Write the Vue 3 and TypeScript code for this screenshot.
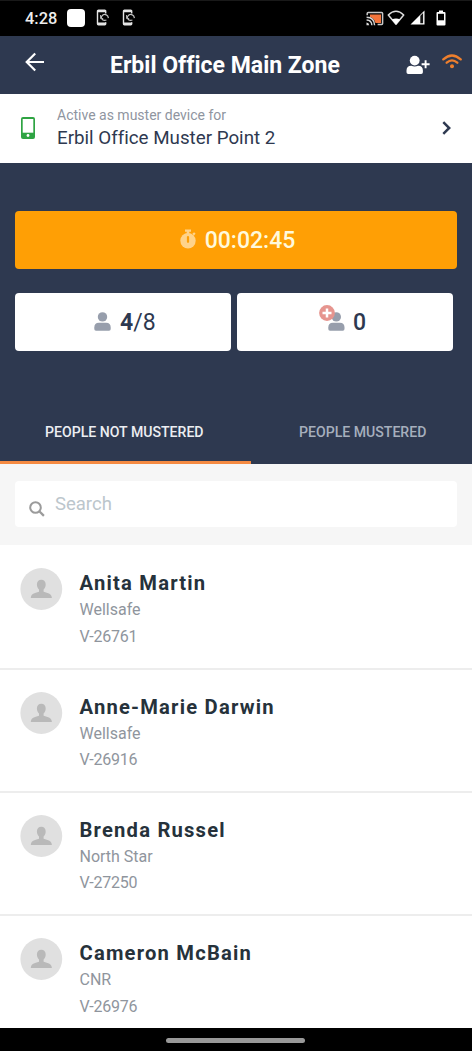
<script setup lang="ts">
interface Person {
  name: string
  company: string
  code: string
}

const people: Person[] = [
  { name: 'Anita Martin', company: 'Wellsafe', code: 'V-26761' },
  { name: 'Anne-Marie Darwin', company: 'Wellsafe', code: 'V-26916' },
  { name: 'Brenda Russel', company: 'North Star', code: 'V-27250' },
  { name: 'Cameron McBain', company: 'CNR', code: 'V-26976' },
]
</script>

<template>
  <div class="screen">
    <div class="status">
      <span class="clock">4:28</span>
      <span class="app-square"></span>
      <svg v-for="n in 2" :key="n" class="sync" viewBox="0 0 14 18">
        <path d="M9.7 4.600V2.200q0-.9-.9-.9H2.400q-.9 0-.9.9v12.600q0 .9.9.9h6.400q.9 0 .9-.9v-1.600" fill="none" stroke="#e4e4e4" stroke-width="1.400" />
        <path d="M1.500 2.400h8.200M1.500 14.300h8.200" stroke="#e4e4e4" stroke-width="1.800" />
        <path d="M5.400 9.200a3.300 3.300 0 0 1 5-3.300q1.800.8 2 3.200M5.600 9.500q1.500 2.700 4.800 1.500" fill="none" stroke="#c4c4c4" stroke-width="1.200" />
        <path d="M4.600 6v3.600h2.600" fill="none" stroke="#bcbcbc" stroke-width="1" />
      </svg>
      <span class="grow"></span>
      <svg class="cast" viewBox="0 0 18 15">
        <path d="M4 3.500h11v8.500H9.500Q8 7 4 6z" fill="#f4743b" />
        <path d="M1.200 4.300V2.400q0-1 1-1h13.400q1 0 1 1v10.200q0 1-1 1h-4" fill="none" stroke="#c9c9c9" stroke-width="1.500" />
        <path d="M.6 6.200q7.800.2 8 8M.6 9q5 .2 5.300 5.200" fill="none" stroke="#d6d6d6" stroke-width="1.400" />
        <path d="M.5 11.600q2.500.2 2.700 2.700H.5z" fill="#ddd" />
      </svg>
      <svg class="net" viewBox="0 0 18 16">
        <path d="M1.300 5Q9-2.500 16.700 5L9 14.200z" fill="none" stroke="#ddd" stroke-width="1.500" stroke-linejoin="round" />
        <path d="M4.800 9.500Q9 7.500 13.200 9.500L9 14.600z" fill="#fff" />
      </svg>
      <svg class="signal" viewBox="0 0 15 15">
        <path d="M.5 14.500L14.500.5v14z" fill="#fff" />
        <path d="M10.300 5.700l2.800-2.800v10.400h-2.800z" fill="#111" />
      </svg>
      <svg class="battery" viewBox="0 0 10 16">
        <path d="M3 .5h4V2h1.500q1 0 1 1v11.500q0 1-1 1h-7q-1 0-1-1V3q0-1 1-1H3z" fill="#fff" />
        <path d="M2 3.800h6v6.500H2z" fill="#000" />
      </svg>
    </div>

    <header class="header">
      <svg class="back" viewBox="0 0 20 20">
        <path d="M19 10H2M10.200 1.500L1.700 10l8.500 8.500" fill="none" stroke="#fff" stroke-width="2.200" />
      </svg>
      <h1 class="title">Erbil Office Main Zone</h1>
      <svg class="add-user" viewBox="0 0 24 20">
        <circle cx="8.700" cy="5.600" r="4.900" fill="#fff" />
        <path d="M.5 17.300v-1.800q0-4.800 4.800-4.800 3.400 1.400 6.800 0 4.800 0 4.800 4.800v1.800q0 1.700-1.700 1.700h-13Q.5 19 .5 17.300z" fill="#fff" />
        <path d="M19.600 5.200v8M15.600 9.200h8" stroke="#fff" stroke-width="1.900" />
      </svg>
      <svg class="wifi" viewBox="0 0 20 15">
        <path d="M1.300 5.400q8.700-7.800 17.400 0M4.700 8.700q5.300-4.700 10.600 0" fill="none" stroke="#ee7f2d" stroke-width="2.300" stroke-linecap="round" />
        <circle cx="10" cy="12.200" r="2" fill="#ee7f2d" />
      </svg>
    </header>

    <div class="device">
      <svg class="phone" viewBox="0 0 14 22">
        <rect width="14" height="22" rx="2" fill="#2fa443" />
        <path d="M1.700 2h10.600v13.700H1.700z" fill="#fff" />
        <circle cx="7" cy="18.500" r="1.400" fill="#fff" />
      </svg>
      <div class="device-text">
        <div class="device-label">Active as muster device for</div>
        <div class="device-name">Erbil Office Muster Point 2</div>
      </div>
      <svg class="chevron" viewBox="0 0 9 14">
        <path d="M1.300 1.200L7.200 7l-5.900 5.800" fill="none" stroke="#2e3950" stroke-width="2.500" />
      </svg>
    </div>

    <section class="panel">
      <div class="timer">
        <svg class="stopwatch" viewBox="0 0 16 20">
          <path d="M5 .5h6v2.300H9.300V5H6.700V2.800H5zM12.300 4.800l1.800-1.600 1.500 1.600-1.700 1.800z" fill="#ffd38a" />
          <circle cx="8" cy="11.800" r="7.700" fill="#ffd38a" />
          <path d="M8 8v4.800" stroke="#ff9f05" stroke-width="2.200" stroke-linecap="round" />
        </svg>
        <span>00:02:45</span>
      </div>
      <div class="counts">
        <div class="count count-left">
          <svg class="person" viewBox="0 0 17 19">
            <circle cx="8.500" cy="4.900" r="4.700" fill="#979eac" />
            <path d="M.3 17v-1.600q0-4.700 4.600-4.700h7.200q4.600 0 4.600 4.700V17q0 1.700-1.700 1.700H2Q.3 18.700.3 17z" fill="#979eac" />
          </svg>
          <span><b>4</b>/8</span>
        </div>
        <div class="count count-right">
          <svg class="injured" viewBox="0 0 26 26">
            <circle cx="17.300" cy="11.900" r="4.700" fill="#979eac" />
            <path d="M9.300 24v-1.600q0-4.700 4.600-4.700h7q4.600 0 4.600 4.700V24q0 1.700-1.700 1.700H11q-1.700 0-1.700-1.700z" fill="#979eac" />
            <circle cx="8" cy="8" r="7.900" fill="#e6958f" />
            <path d="M8 3.500v9M3.500 8h9" stroke="#fff" stroke-width="2.500" />
          </svg>
          <span class="zero">0</span>
        </div>
      </div>
      <nav class="tabs">
        <div class="tab active">PEOPLE NOT MUSTERED</div>
        <div class="tab">PEOPLE MUSTERED</div>
      </nav>
    </section>

    <div class="search-area">
      <div class="search">
        <svg class="glass" viewBox="0 0 16 16">
          <circle cx="6.500" cy="6.500" r="5.300" fill="none" stroke="#9b9b9b" stroke-width="2" />
          <path d="M10.300 10.300l4.600 4.600" stroke="#9b9b9b" stroke-width="2.300" />
        </svg>
        <span class="placeholder">Search</span>
      </div>
    </div>

    <main class="list">
      <article v-for="p in people" :key="p.code" class="row">
        <svg class="avatar" viewBox="0 0 43 42">
          <circle cx="21.300" cy="21" r="20.900" fill="#e0e0e0" />
          <path d="M21.300 11.700c2.700 0 4.400 1.900 4.400 4.800 0 2-.8 3.900-2.100 5v2.300c4.500 1.100 8.300 2.400 8.300 6.200H10.800c0-3.800 3.700-5.100 8.200-6.200v-2.300c-1.300-1.100-2.100-3-2.100-5 0-2.900 1.700-4.800 4.400-4.800z" fill="#b9b9b9" />
        </svg>
        <div>
          <div class="name">{{ p.name }}</div>
          <div class="meta">{{ p.company }}</div>
          <div class="meta code">{{ p.code }}</div>
        </div>
      </article>
    </main>

    <footer class="navbar"><span class="handle"></span></footer>
  </div>
</template>

<style>
body {
  margin: 0;
  overflow: hidden;
}
</style>

<style scoped>
.screen {
  width: 472px;
  height: 1051px;
  display: flex;
  flex-direction: column;
  overflow: hidden;
  background: #fff;
  font-family: Roboto, "Liberation Sans", sans-serif;
  font-variant-ligatures: none;
  color: #2e3950;
  white-space: nowrap;
}
svg {
  display: block;
  flex: none;
}
.status {
  box-sizing: border-box;
  flex: none;
  height: 36px;
  display: flex;
  align-items: flex-start;
  padding: 0 25px;
  background: #000;
  border-top: 1px solid #191919;
}
.clock {
  width: 42px;
  color: #eee;
  font-size: 16.400px;
  font-weight: 500;
  line-height: 35px;
}
.app-square {
  width: 18px;
  height: 18px;
  margin-top: 8px;
  border-radius: 4px;
  background: #fff;
}
.sync {
  width: 14px;
  height: 18px;
  margin: 8px 0 0 11px;
}
.sync + .sync {
  margin-left: 12px;
}
.grow {
  flex: 1;
}
.cast {
  width: 18px;
  height: 15px;
  margin-top: 10px;
}
.net {
  width: 18px;
  height: 16px;
  margin: 9px 0 0 3px;
}
.signal {
  width: 15px;
  height: 15px;
  margin: 9px 0 0 5px;
}
.battery {
  width: 10px;
  height: 16px;
  margin: 9px 1px 0 11px;
}
.header {
  flex: none;
  height: 58px;
  display: flex;
  align-items: flex-start;
  padding-left: 25px;
  background: #2e3950;
}
.back {
  width: 20px;
  height: 20px;
  margin-top: 16px;
}
.title {
  width: 296px;
  margin: 0 0 0 65px;
  color: #fff;
  font-size: 23px;
  font-weight: 700;
  line-height: 59px;
}
.add-user {
  width: 24px;
  height: 20px;
  margin-top: 19px;
}
.wifi {
  width: 20px;
  height: 15px;
  margin: 18px 0 0 12px;
}
.device {
  flex: none;
  height: 69px;
  display: flex;
  padding-left: 21px;
  background: #fff;
}
.phone {
  width: 14px;
  height: 22px;
  margin-top: 23px;
}
.device-text {
  width: 385px;
  margin: 12px 0 0 22px;
}
.device-label {
  font-size: 14px;
  line-height: 18px;
  color: #8f959f;
}
.device-name {
  font-size: 18.750px;
  line-height: 29px;
}
.chevron {
  width: 9px;
  height: 14px;
  margin-top: 27px;
}
.panel {
  box-sizing: border-box;
  flex: none;
  height: 301px;
  padding-top: 48px;
  background: #2e3950;
}
.timer {
  box-sizing: border-box;
  width: 442px;
  height: 58px;
  margin-left: 15px;
  padding-left: 3px;
  display: flex;
  justify-content: center;
  gap: 9px;
  border-radius: 4px;
  background: #ff9f05;
  color: #fff9dc;
  font-size: 23px;
  font-weight: 500;
  line-height: 59px;
}
.stopwatch {
  width: 16px;
  height: 20px;
  margin-top: 18px;
}
.counts {
  display: flex;
  gap: 6px;
  margin: 24px 0 0 15px;
}
.count {
  box-sizing: border-box;
  width: 216px;
  height: 58px;
  display: flex;
  border-radius: 4px;
  background: #fff;
  font-size: 23px;
  line-height: 59px;
}
.count-left {
  padding-left: 79px;
  gap: 9px;
}
.count-right {
  padding-left: 82px;
  gap: 8px;
}
.person {
  width: 17px;
  height: 19px;
  margin-top: 19px;
}
.injured {
  width: 26px;
  height: 26px;
  margin-top: 12px;
}
.zero {
  font-weight: 500;
}
.tabs {
  display: flex;
  margin-top: 51px;
}
.tab {
  box-sizing: border-box;
  width: 251px;
  height: 62px;
  padding-left: 45px;
  color: #a6afbd;
  font-size: 14.100px;
  font-weight: 500;
  line-height: 60px;
}
.tab + .tab {
  width: 221px;
  padding-left: 48px;
}
.active {
  color: #eceef2;
  border-bottom: 3px solid #f58a42;
}
.search-area {
  box-sizing: border-box;
  flex: none;
  height: 81px;
  padding: 17px 15px;
  background: #f6f6f6;
}
.search {
  height: 46px;
  display: flex;
  border-radius: 4px;
  background: #fff;
}
.glass {
  width: 16px;
  height: 16px;
  margin: 20px 0 0 14px;
}
.placeholder {
  margin-left: 10px;
  color: #bcc6cc;
  font-size: 18.500px;
  line-height: 46px;
}
.list {
  flex: 1;
  overflow: hidden;
}
.row {
  box-sizing: border-box;
  height: 123.300px;
  display: flex;
  gap: 16.500px;
  padding: 23px 0 0 20px;
  border-bottom: 2px solid #ededed;
}
.row:first-child {
  height: 124.700px;
  padding-top: 24px;
}
.avatar {
  width: 43px;
  height: 42px;
  margin-top: -0.800px;
}
.name {
  color: #26323b;
  font-size: 20.200px;
  font-weight: 700;
  letter-spacing: 1.200px;
  line-height: 28px;
}
.meta {
  color: #8f959d;
  font-size: 16px;
  line-height: 26.500px;
}
.code {
  letter-spacing: -0.200px;
}
.navbar {
  flex: none;
  height: 23px;
  display: flex;
  padding-left: 166px;
  background: #000;
}
.handle {
  width: 139px;
  height: 5px;
  margin-top: 10px;
  border-radius: 3px;
  background: #999;
}
</style>
